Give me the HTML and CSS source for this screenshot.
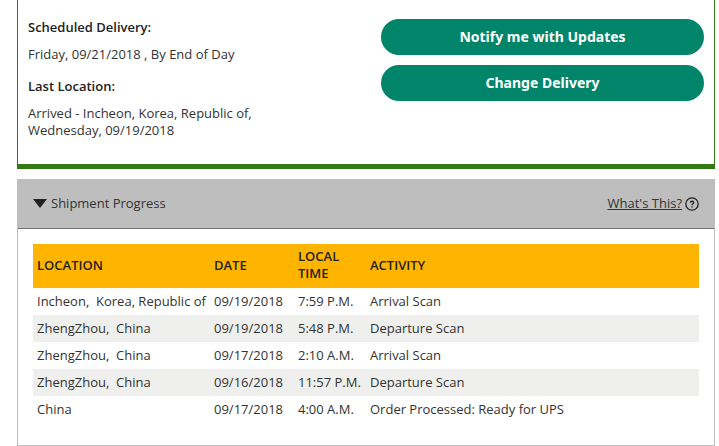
FILE: index.html
```
<!DOCTYPE html>
<html lang="en">
<head>
  <meta charset="UTF-8">
  <meta name="viewport" content="width=device-width, initial-scale=1">
  <title>Tracking Detail</title>
  <link rel="stylesheet" href="styles.css">
</head>
<body>
  <main class="tracking">
    <!-- Package summary -->
    <section class="summary">
      <dl class="summary-info">
        <dt>Scheduled Delivery:</dt>
        <dd>Friday, 09/21/2018 , By End of Day</dd>
        <dt>Last Location:</dt>
        <dd>Arrived - Incheon, Korea, Republic of,<br>Wednesday, 09/19/2018</dd>
      </dl>
      <div class="summary-actions">
        <button type="button" class="btn">Notify me with Updates</button>
        <button type="button" class="btn">Change Delivery</button>
      </div>
    </section>

    <!-- Shipment progress -->
    <section class="progress">
      <div class="progress-header">
        <button type="button" class="toggle" aria-expanded="true">
          <svg class="caret" viewBox="0 0 14 9" aria-hidden="true"><path d="M0 0h14L7 9z"/></svg>
          Shipment Progress
        </button>
        <a href="#" class="help">
          <span class="help-text">What's This?</span>
          <svg class="help-icon" viewBox="0 0 14 14" aria-hidden="true">
            <circle cx="7" cy="7" r="6.2"/>
            <path d="M5.3 5.6C5.4 3.8 8.7 3.8 8.7 5.6C8.7 6.8 7 6.8 7 8.3M7 9.3V10.5"/>
          </svg>
        </a>
      </div>
      <div class="progress-body">
        <table class="scans">
          <thead>
            <tr>
              <th class="col-location">Location</th>
              <th class="col-date">Date</th>
              <th class="col-time">Local Time</th>
              <th>Activity</th>
            </tr>
          </thead>
          <tbody>
            <tr>
              <td>Incheon,&nbsp; Korea, Republic of</td>
              <td>09/19/2018</td>
              <td>7:59 P.M.</td>
              <td>Arrival Scan</td>
            </tr>
            <tr>
              <td>ZhengZhou,&nbsp; China</td>
              <td>09/19/2018</td>
              <td>5:48 P.M.</td>
              <td>Departure Scan</td>
            </tr>
            <tr>
              <td>ZhengZhou,&nbsp; China</td>
              <td>09/17/2018</td>
              <td>2:10 A.M.</td>
              <td>Arrival Scan</td>
            </tr>
            <tr>
              <td>ZhengZhou,&nbsp; China</td>
              <td>09/16/2018</td>
              <td>11:57 P.M.</td>
              <td>Departure Scan</td>
            </tr>
            <tr>
              <td>China</td>
              <td>09/17/2018</td>
              <td>4:00 A.M.</td>
              <td>Order Processed: Ready for UPS</td>
            </tr>
          </tbody>
        </table>
      </div>
    </section>
  </main>
</body>
</html>
```
FILE: styles.css
```
* {
  box-sizing: border-box;
}

body {
  margin: 0;
  background: #fff;
  color: #333;
  font-family: "Open Sans", "Liberation Sans", sans-serif;
  font-size: 13px;
  line-height: 17px;
}

.tracking {
  margin: 0 4px 0 17px;
}

/* Package summary */
.summary {
  display: grid;
  grid-template-columns: 353fr 323fr;
  padding: 19px 10px 25px;
  border: 1px solid #337a15;
  border-top: 0;
  border-bottom-width: 5px;
}

.summary-info {
  margin: 0;
}

.summary-info dt {
  margin-bottom: 10px;
  color: #222;
  font-weight: 600;
}

.summary-info dd {
  margin: 0 0 15px;
}

.summary-info dd:last-child {
  margin-bottom: 0;
}

.summary-actions {
  display: flex;
  flex-direction: column;
  gap: 10px;
}

.btn {
  height: 36px;
  padding: 0 16px 2px;
  border: 0;
  border-radius: 18px;
  background: #00856a;
  color: #fff;
  font-family: "Noto Sans", sans-serif;
  font-size: 14px;
  font-weight: bold;
  cursor: pointer;
}

/* Shipment progress */
.progress {
  margin-top: 10px;
  border: 1px solid #bebebe;
  border-top: 0;
}

.progress-header {
  display: flex;
  align-items: center;
  justify-content: space-between;
  height: 50px;
  padding: 0 15px;
  background: #bebebe;
  border-bottom: 1px solid #707070;
}

.toggle {
  display: flex;
  align-items: center;
  gap: 4px;
  padding: 0;
  border: 0;
  background: none;
  color: inherit;
  font: inherit;
  cursor: pointer;
}

.caret {
  width: 14px;
  height: 9px;
  fill: #222;
}

.help {
  display: flex;
  align-items: center;
  gap: 3px;
  color: inherit;
  text-decoration: none;
}

.help-text {
  text-decoration: underline;
}

.help-icon {
  width: 14px;
  height: 14px;
  fill: none;
  stroke: #222;
  stroke-width: 1.3;
}

.progress-body {
  padding: 15px 15px 22px;
}

.scans {
  width: 100%;
  border-collapse: collapse;
  table-layout: fixed;
}

.scans th,
.scans td {
  padding: 5px 4px;
  text-align: left;
  white-space: nowrap;
}

.scans th {
  padding: 4px 4px 6px;
  background: #ffb500;
  color: #222;
  font-weight: 600;
  text-transform: uppercase;
  white-space: normal;
}

.scans tbody tr:nth-child(even) {
  background: #efefed;
}

.col-location {
  width: 177px;
}

.col-date {
  width: 84px;
}

.col-time {
  width: 72px;
}
```
